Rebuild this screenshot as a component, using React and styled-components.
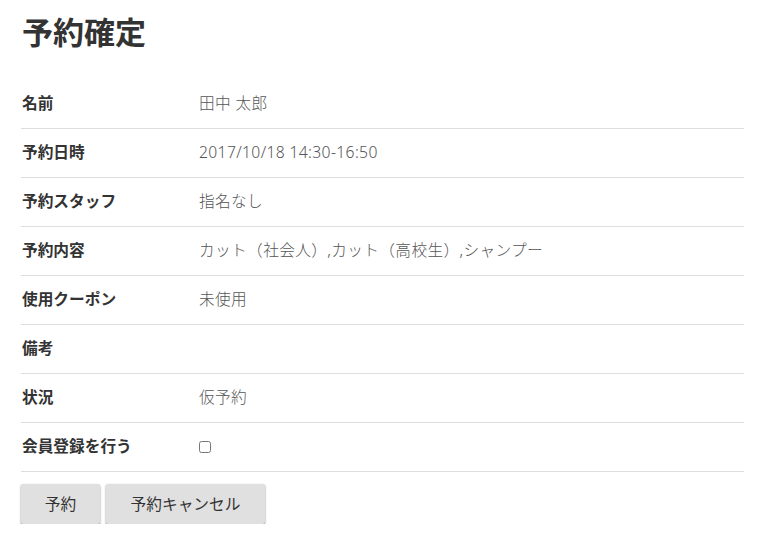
import React from 'react';
import styled, { createGlobalStyle } from 'styled-components';

const GlobalStyle = createGlobalStyle`
  body {
    margin: 0;
    background: #fff;
    font-family: "Noto Sans CJK JP", "Noto Sans", sans-serif;
    color: #333;
  }
`;

const Page = styled.div`
  padding: 11px 27px 0 21px;
  width: 723px;
`;

const Title = styled.h1`
  margin: 0 0 29px 1px;
  font-size: 31px;
  line-height: 40px;
  font-weight: 700;
  color: #333;
`;

const Table = styled.div`
  display: flex;
  flex-direction: column;
`;

const Row = styled.div`
  display: grid;
  grid-template-columns: 178px 1fr;
  align-items: center;
  box-sizing: border-box;
  height: 49px;
  padding-bottom: 3px;
  border-bottom: 1px solid #ddd;
`;

const Label = styled.div`
  padding-left: 1px;
  font-size: 15.7px;
  font-weight: 700;
  color: #333;
`;

const Value = styled.div`
  font-family: "Noto Sans", "Noto Sans CJK JP", sans-serif;
  font-size: 15.7px;
  font-weight: 300;
  letter-spacing: 0.35px;
  color: #555;
`;

const Check = styled.input`
  margin: 0;
  width: 12px;
  height: 12px;
  vertical-align: middle;
`;

const Actions = styled.div`
  display: flex;
  gap: 6px;
  margin-top: 12px;
`;

const Button = styled.button`
  height: 40px;
  width: ${p => p.$w}px;
  border: none;
  border-radius: 2px;
  background: #e0e0e0;
  box-shadow: 0 1px 2px rgba(0, 0, 0, 0.55);
  font-family: inherit;
  font-size: 15.7px;
  color: #333;
  padding-bottom: 3px;
  cursor: pointer;
`;

const rows = [
  ['名前', '田中 太郎'],
  ['予約日時', '2017/10/18 14:30-16:50'],
  ['予約スタッフ', '指名なし'],
  ['予約内容', 'カット（社会人）,カット（高校生）,シャンプー'],
  ['使用クーポン', '未使用'],
  ['備考', ''],
  ['状況', '仮予約'],
];

export default function App() {
  return (
    <Page>
      <GlobalStyle />
      <Title>予約確定</Title>
      <Table>
        {rows.map(([label, value]) => (
          <Row key={label}>
            <Label>{label}</Label>
            <Value>{value}</Value>
          </Row>
        ))}
        <Row>
          <Label>会員登録を行う</Label>
          <Value>
            <Check type="checkbox" />
          </Value>
        </Row>
      </Table>
      <Actions>
        <Button $w={79}>予約</Button>
        <Button $w={159}>予約キャンセル</Button>
      </Actions>
    </Page>
  );
}
